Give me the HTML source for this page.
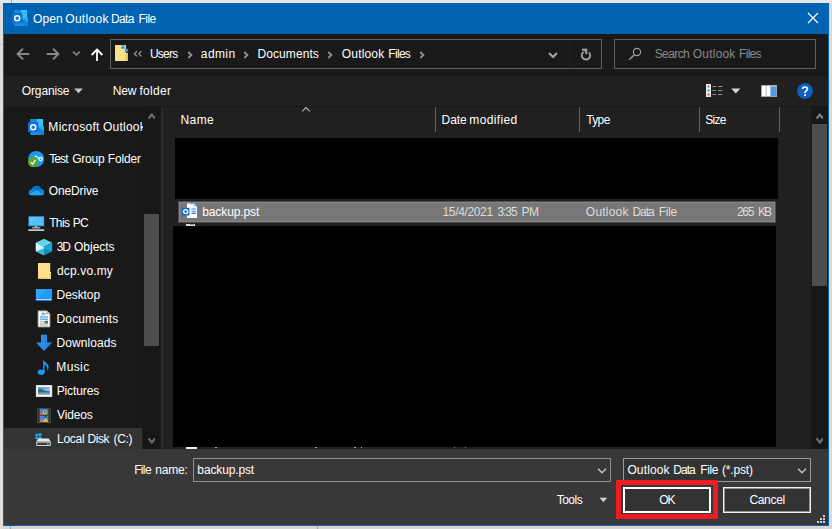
<!DOCTYPE html>
<html><head><meta charset="utf-8"><title>Open Outlook Data File</title>
<style>
html,body{margin:0;padding:0;}
body{width:832px;height:529px;overflow:hidden;background:#e7e7e7;position:relative;font-family:"Liberation Sans",sans-serif;font-size:12px;}
.a{position:absolute;}
.t{position:absolute;white-space:pre;line-height:16px;height:16px;font-size:12px;}

</style></head>
<body>
<svg width="0" height="0" style="position:absolute">
<defs>
<symbol id="ol" viewBox="0 0 16 16">
<rect x="2.3" y="0" width="7" height="8" fill="#1490df"/>
<rect x="9" y="0" width="6" height="8" fill="#35c1f8"/>
<path d="M2.3 8H15L16 7.5V16H2.3Z" fill="#1a8fe3"/>
<path d="M9 8L16 7.4V12.2Z" fill="#28a8ea"/>
<path d="M9 8L16 12.2V16H12Z" fill="#1178d0" opacity=".55"/>
<rect x="0" y="3.1" width="10.4" height="10.1" rx=".6" fill="#1071d3"/>
<circle cx="5.2" cy="8.15" r="2.5" fill="none" stroke="#fff" stroke-width="1.5"/>
</symbol>
<symbol id="chev" viewBox="0 0 6 8"><path d="M1.2 1L4.4 4L1.2 7" fill="none" stroke="#8c8c8c" stroke-width="1.9"/></symbol>
</defs>
</svg>
<!-- outside desktop hints -->
<div class="a" style="left:829px;top:3px;width:3px;height:526px;background:#d9d9d9"></div>
<div class="a" style="left:0;top:3px;width:3px;height:526px;background:#e0dedc"></div>
<div class="a" style="left:3px;top:526px;width:829px;height:3px;background:#d5d5d5"></div>
<div class="a" style="left:11px;top:0;width:1px;height:3px;background:#a8a8a8"></div>
<div class="a" style="left:0;top:44px;width:3px;height:1px;background:#c4c4c4"></div>
<div class="a" style="left:10px;top:526px;width:1px;height:3px;background:#999"></div>
<div class="a" style="left:317px;top:526px;width:1px;height:3px;background:#a4a4a4"></div>
<!-- window -->
<div class="a" style="left:3px;top:3px;width:826px;height:523px;background:#0063b1"></div>
<!-- nav bar -->
<div class="a" style="left:4px;top:34px;width:824px;height:42px;background:#191919"></div>
<!-- toolbar -->
<div class="a" style="left:4px;top:76px;width:824px;height:30px;background:#202020"></div>
<!-- main -->
<div class="a" style="left:4px;top:106px;width:824px;height:343px;background:#191919"></div>
<!-- sidebar scrollbar track -->
<div class="a" style="left:143px;top:106px;width:18px;height:343px;background:#171717"></div>
<div class="a" style="left:144px;top:214px;width:15px;height:132px;background:#4d4d4d"></div>
<!-- splitter strip -->
<div class="a" style="left:161px;top:107px;width:2px;height:342px;background:#2b2b2b"></div>
<!-- file list bg -->
<div class="a" style="left:163px;top:107px;width:649px;height:342px;background:#202020"></div>
<!-- right scrollbar -->
<div class="a" style="left:811px;top:106px;width:17px;height:343px;background:#171717"></div>
<div class="a" style="left:812px;top:124px;width:15px;height:162px;background:#4d4d4d"></div>
<!-- sidebar selected -->
<div class="a" style="left:4px;top:428px;width:138px;height:21px;background:#333"></div>
<!-- bottom panel -->
<div class="a" style="left:4px;top:449px;width:824px;height:76px;background:#383838"></div>
<!-- column separators -->
<div class="a" style="left:435px;top:107px;width:1px;height:25px;background:#636363"></div>
<div class="a" style="left:579px;top:107px;width:1px;height:25px;background:#636363"></div>
<div class="a" style="left:699px;top:107px;width:1px;height:25px;background:#636363"></div>
<div class="a" style="left:779px;top:107px;width:1px;height:25px;background:#636363"></div>
<!-- black redactions -->
<div class="a" style="left:175px;top:138px;width:603px;height:61px;background:#000"></div>
<div class="a" style="left:173px;top:226px;width:603px;height:221px;background:#000"></div>
<!-- selected row -->
<div class="a" style="left:178px;top:201px;width:598px;height:22px;background:#777;border:1px solid #4e4e4e;box-sizing:border-box"></div>
<div class="a" style="left:179px;top:202px;width:596px;height:20px;border:1px solid #868686;box-sizing:border-box"></div>
<!-- address box -->
<div class="a" style="left:110px;top:39px;width:492px;height:30px;border:1px solid #5e5e5e;box-sizing:border-box;background:#191919"></div>
<!-- search box -->
<div class="a" style="left:614px;top:39px;width:202px;height:30px;border:1px solid #5e5e5e;box-sizing:border-box;background:#191919"></div>
<!-- filename input -->
<div class="a" style="left:193px;top:458px;width:418px;height:24px;border:1px solid #8f8f8f;box-sizing:border-box;background:#383838"></div>
<!-- filter combo -->
<div class="a" style="left:623px;top:458px;width:188px;height:24px;border:1px solid #9a9a9a;box-sizing:border-box;background:#333"></div>
<!-- OK -->
<div class="a" style="left:616px;top:480px;width:102px;height:39px;border:5px solid #ed1c24;box-sizing:border-box;background:#2f3a3a"></div>
<div class="a" style="left:623px;top:487px;width:88px;height:26px;border:2px solid #fff;box-sizing:border-box;background:#333"></div>
<!-- Cancel -->
<div class="a" style="left:723px;top:487px;width:88px;height:26px;border:1px solid #f2f2f2;box-sizing:border-box;background:#333"></div>
<div class="a" style="left:724px;top:488px;width:86px;height:24px;border:1px solid #909090;box-sizing:border-box"></div>
<!-- title icon + close -->
<svg class="a" style="left:12px;top:10px" width="16" height="16"><use href="#ol"/></svg>
<svg class="a" style="left:807px;top:12px" width="12" height="12" viewBox="0 0 12 12"><path d="M1 1L11 11M11 1L1 11" stroke="#fff" stroke-width="1.2" fill="none"/></svg>
<!-- nav arrows -->
<svg class="a" style="left:16px;top:47px" width="14" height="14" viewBox="0 0 14 14"><path d="M13.3 7H2.2M7 1.6L1.6 7L7 12.4" fill="none" stroke="#888" stroke-width="2"/></svg>
<svg class="a" style="left:46px;top:47px" width="14" height="14" viewBox="0 0 14 14"><path d="M.7 7H11.8M7 1.6L12.4 7L7 12.4" fill="none" stroke="#888" stroke-width="2"/></svg>
<svg class="a" style="left:72px;top:50px" width="9" height="7" viewBox="0 0 9 7"><path d="M1 1.6L4.4 5L7.8 1.6" fill="none" stroke="#7a7a7a" stroke-width="1.9"/></svg>
<svg class="a" style="left:90px;top:48px" width="14" height="14" viewBox="0 0 14 14"><path d="M7 13V2M1.6 7L7 1.6L12.4 7" fill="none" stroke="#fff" stroke-width="1.8"/></svg>
<!-- address folder (zip) -->
<svg class="a" style="left:114px;top:44px" width="15" height="18" viewBox="0 0 15 18"><path d="M1 1H12V9H14V17H1Z" fill="#f8d775"/><path d="M1 1H11V17H1Z" fill="#fbe08c"/><path d="M12 10H14V17H12Z" fill="#e9c14f"/><rect x="7.4" y="1.4" width="3.1" height="3.3" fill="#2b8de2"/><rect x="8" y="2" width="1.4" height="1.4" fill="#6cc0f8"/><rect x="10.9" y="4.7" width="3.2" height="3.5" fill="#1f83dc"/><rect x="11.6" y="5.4" width="1.4" height="1.4" fill="#6cc0f8"/></svg>
<svg class="a" style="left:133px;top:50px" width="10" height="8" viewBox="0 0 10 8"><path d="M4 1.2L1.4 3.8L4 6.4M8.4 1.2L5.8 3.8L8.4 6.4" fill="none" stroke="#a4a4a4" stroke-width="1.15"/></svg>
<svg class="a" style="left:186.5px;top:51px" width="6" height="8"><use href="#chev"/></svg>
<svg class="a" style="left:243px;top:51px" width="6" height="8"><use href="#chev"/></svg>
<svg class="a" style="left:327px;top:51px" width="6" height="8"><use href="#chev"/></svg>
<svg class="a" style="left:419px;top:51px" width="6" height="8"><use href="#chev"/></svg>
<!-- address dropdown + refresh -->
<svg class="a" style="left:547px;top:51px" width="12" height="8" viewBox="0 0 12 8"><path d="M2 2L6 6L10 2" fill="none" stroke="#a6a6a6" stroke-width="2"/></svg>
<div class="a" style="left:569px;top:40px;width:1px;height:28px;background:#1f1f1f"></div>
<svg class="a" style="left:580px;top:47px" width="13" height="14" viewBox="0 0 13 14"><path d="M8.97 5.43A4.2 4.2 0 1 1 3.6 4.9" fill="none" stroke="#9c9c9c" stroke-width="1.9"/><path d="M1.9 1.8H7.2V7.3Z" fill="#7c7c7c"/><path d="M1.9 2.7H6.3V7.3" fill="none" stroke="#a2a2a2" stroke-width="1.8"/></svg>
<!-- search magnifier -->
<svg class="a" style="left:628px;top:47px" width="15" height="14" viewBox="0 0 15 14"><circle cx="9" cy="5" r="3.6" fill="none" stroke="#a2a2a2" stroke-width="1.1"/><path d="M6.3 7.7L1.2 12.8" stroke="#a2a2a2" stroke-width="1.3"/></svg>
<!-- toolbar -->
<svg class="a" style="left:74px;top:88px" width="9" height="6" viewBox="0 0 9 6"><path d="M.2 .6H8.8L4.5 5.2Z" fill="#c8c8c8"/></svg>
<svg class="a" style="left:706px;top:84px" width="17" height="13" viewBox="0 0 17 13"><rect x="0" y="0" width="5" height="13" fill="#ececec"/><rect x="1.6" y="1.6" width="1.8" height="1.8" fill="#3f8f5a"/><rect x="1.6" y="5.6" width="1.8" height="1.8" fill="#2f7fd8"/><rect x="1.6" y="9.6" width="1.8" height="1.8" fill="#d83a2f"/><path d="M6.4 2.5H10M12 2.5H16.4M6.4 6.5H10M12 6.5H16.4M6.4 10.5H10M12 10.5H16.4" stroke="#8e8e8e" stroke-width="1"/></svg>
<svg class="a" style="left:731px;top:88px" width="10" height="6" viewBox="0 0 10 6"><path d="M.3 .6H9.3L4.8 5.4Z" fill="#d8d8d8"/></svg>
<svg class="a" style="left:761px;top:85px" width="16" height="12" viewBox="0 0 16 12"><rect x=".5" y=".5" width="15" height="11" fill="#fff" stroke="#a8a8a8"/><rect x="4.6" y="1" width="1" height="10" fill="#b8b8b8"/><rect x="9.4" y="1.4" width="5.8" height="9.8" fill="#4a9be6"/><rect x="9.4" y="1" width="5.8" height="1" fill="#9ab8d8"/></svg>
<svg class="a" style="left:797px;top:83px" width="16" height="16" viewBox="0 0 16 16"><circle cx="8" cy="8" r="7.8" fill="#0a64c8"/><path d="M5.6 6.1C5.6 3.3 10.4 3.3 10.4 6.1C10.4 7.8 8 7.9 8 9.9" fill="none" stroke="#fff" stroke-width="1.7"/><rect x="7.1" y="11.2" width="1.8" height="1.8" fill="#fff"/></svg>
<!-- sort caret -->
<svg class="a" style="left:300.6px;top:106px" width="10" height="7" viewBox="0 0 10 7"><path d="M1.2 5.4L5 1.6L8.8 5.4" fill="none" stroke="#b6b6b6" stroke-width="1.1"/></svg>
<!-- scroll chevrons -->
<svg class="a" style="left:147.7px;top:112px" width="7.6" height="9" viewBox="0.7 0 7.6 9"><path d="M1.2 6.6L4.5 2.6L7.8 6.6" fill="none" stroke="#6c6c6c" stroke-width="2.3"/></svg>
<svg class="a" style="left:147.7px;top:436px" width="7.6" height="9" viewBox="0.7 0 7.6 9"><path d="M1.2 2.4L4.5 6.4L7.8 2.4" fill="none" stroke="#6c6c6c" stroke-width="2.3"/></svg>
<svg class="a" style="left:815.7px;top:112px" width="7.6" height="9" viewBox="0.7 0 7.6 9"><path d="M1.2 6.6L4.5 2.6L7.8 6.6" fill="none" stroke="#7e7e7e" stroke-width="2.3"/></svg>
<svg class="a" style="left:815.7px;top:436px" width="7.6" height="9" viewBox="0.7 0 7.6 9"><path d="M1.2 2.4L4.5 6.4L7.8 2.4" fill="none" stroke="#6c6c6c" stroke-width="2.3"/></svg>
<!-- sidebar icons -->
<svg class="a" style="left:28px;top:119px" width="16" height="16"><use href="#ol"/></svg>
<svg class="a" style="left:28px;top:151px" width="17" height="17" viewBox="0 0 17 17"><circle cx="8.2" cy="8" r="8" fill="#1a9bf0"/><circle cx="12.6" cy="8" r="1.6" fill="none" stroke="#fff" stroke-width="1.1"/><path d="M6.6 5.4H8.6C10 5.4 10 8 11 8" fill="none" stroke="#fff" stroke-width="1.1"/><circle cx="5.1" cy="11.1" r="5.1" fill="#5aa82c"/><path d="M2.8 11.2L4.6 13L7.4 8.8" fill="none" stroke="#fff" stroke-width="1.2"/></svg>
<svg class="a" style="left:28px;top:185.4px" width="17" height="11" viewBox="0 0 17 12" preserveAspectRatio="none"><path d="M3.6 11.2C-.6 11.2 -.4 5 3.8 4.6C5.4 -.4 12 -.2 13 4.4C17.4 4.6 17.4 11.2 13.4 11.2Z" fill="#1183de"/><path d="M4.6 3.4C6.6 -.4 12 0 13 4.4L9 6.6Z" fill="#0c6cc6"/><path d="M1.4 10.2L8.4 5.6L15.6 10C15 10.8 14.4 11.2 13.4 11.2H3.6C2.6 11.2 1.8 10.8 1.4 10.2Z" fill="#29a5ec"/></svg>
<svg class="a" style="left:28px;top:216px" width="17" height="16" viewBox="0 0 17 16"><rect x=".4" y=".2" width="15.8" height="10" fill="#2a9ae6"/><rect x="1.2" y="1" width="14.2" height="8.4" fill="#55bdf7"/><path d="M1.2 9.4V1H9Z" fill="#6ec9fa" opacity=".6"/><rect x="7.2" y="10.2" width="2" height="1.2" fill="#dfe3e8"/><rect x="4.2" y="11.2" width="8" height="1.2" fill="#c4cad2"/><rect x=".2" y="13.2" width="16.2" height="1.9" rx=".9" fill="#c2c8d0"/></svg>
<svg class="a" style="left:35px;top:238px" width="18" height="18" viewBox="0 0 18 18"><path d="M9 .8L17.2 4.8L9 8.8L.8 4.8Z" fill="#62d4ec"/><path d="M.8 4.8L9 8.8V17.2L.8 13.2Z" fill="#c6f0fa"/><path d="M17.2 4.8L9 8.8V17.2L17.2 13.2Z" fill="#1ba8cf"/><path d="M.8 13.2L9 10.4V17.2Z" fill="#35b9d8"/><path d="M17.2 13.2L9 10.4V17.2Z" fill="#0f8db6"/><path d="M.8 4.8L4.6 6.7V12L.8 13.2Z" fill="#e6f9fd" opacity=".7"/></svg>
<svg class="a" style="left:38px;top:263px" width="14" height="16" viewBox="0 0 14 16"><path d="M0 0H12.2V9.2H13V16H0Z" fill="#ffe08a"/><path d="M0 14.8H13V16H0Z" fill="#f2c24e"/><path d="M10.4 9.2H13V16H10.4Z" fill="#f5cf63"/><path d="M10.4 9.2H13V10H11.2V16H10.4Z" fill="#fff0b8"/></svg>
<svg class="a" style="left:35px;top:289px" width="18" height="12" viewBox="0 0 18 12"><rect x=".9" y="0" width="16.2" height="11.8" fill="#1e9cf6"/><path d="M.9 0H11L5.4 9.4H.9Z" fill="#3aabfa" opacity=".55"/><rect x=".9" y="9" width="16.2" height="2.8" fill="#0f7ddc"/><path d="M2 10.4H16" stroke="#eaf4ff" stroke-width=".9"/><rect x="1.6" y="9.8" width="1.2" height="1.2" fill="#fff"/><rect x="14.6" y="9.8" width="1.2" height="1.2" fill="#fff"/></svg>
<svg class="a" style="left:37px;top:310px" width="14" height="18" viewBox="0 0 14 18"><path d="M1 .8H10L13 3.8V17H1Z" fill="#fafafa" stroke="#8a8a8a" stroke-width=".8"/><path d="M10 .8V3.8H13" fill="#d8d8d8" stroke="#8a8a8a" stroke-width=".6"/><path d="M3 7H11M3 9.2H11" stroke="#2b86dc" stroke-width="1"/><path d="M3 11.4H6.4M3 13.2H6.4M3 15H11" stroke="#9a9a9a" stroke-width=".8"/><rect x="7.4" y="10.8" width="3.6" height="2.8" fill="#4b7d6a"/><path d="M4.6 5.4L6 2.6L7.2 5.4M7.8 3.6H9.4" stroke="#2b86dc" stroke-width=".9" fill="none"/></svg>
<svg class="a" style="left:35px;top:334px" width="18" height="18" viewBox="0 0 18 18"><path d="M6 .8H12V8.6H17L9 17L1 8.6H6Z" fill="#2b8fe8"/><path d="M9 .8H12V8.6H17L9 17Z" fill="#1f7fd8" opacity=".5"/></svg>
<svg class="a" style="left:37px;top:358px" width="14" height="18" viewBox="0 0 14 18"><ellipse cx="4.2" cy="14.2" rx="3.4" ry="2.6" fill="#1a9ef5"/><path d="M6.2 14.2V1C6.6 4.4 11.6 5.2 11.6 9.2C11.6 10.8 11 11.8 10.2 12.6C10.8 9.6 9.4 7.6 7.6 6.8V14.2Z" fill="#1a9ef5"/></svg>
<svg class="a" style="left:35px;top:385px" width="18" height="12" viewBox="0 0 18 12"><defs><linearGradient id="sky" x1="0" y1="0" x2="1" y2="0"><stop offset="0" stop-color="#4f92e2"/><stop offset="1" stop-color="#9cc4ee"/></linearGradient></defs><rect x=".9" y="0" width="16.3" height="12" fill="#f4f4f4"/><rect x="1.4" y=".5" width="15.3" height="11" fill="none" stroke="#d0d0d0" stroke-width=".6"/><rect x="3" y="2" width="12" height="8" fill="url(#sky)"/><path d="M3 5C4.6 3.6 6.2 3.8 8 5C10 6.2 12.4 6.2 15 6.6V8H3Z" fill="#3c6b58"/><path d="M3 7.6C7 7 11 7.4 15 7.2V10H3Z" fill="#6f95b4"/><path d="M3 8.8H15V10H3Z" fill="#9fb8cc"/></svg>
<svg class="a" style="left:37px;top:408px" width="14" height="15" viewBox="0 0 14 15"><rect x="0" y="0" width="14" height="15" fill="#484848"/><rect x="3" y="1" width="8" height="6" fill="#4a80e0"/><rect x="3" y="8" width="8" height="6" fill="#4a80e0"/><rect x="3" y="5" width="3.4" height="2" fill="#e0603a"/><rect x="8.6" y="5.4" width="2.4" height="1.6" fill="#3c9a4a"/><circle cx="7.8" cy="4.2" r="1.9" fill="#e8d038"/><rect x="7" y="3.4" width="1.6" height="1.2" fill="#2a2a2a"/><rect x="3" y="12" width="3" height="2" fill="#e07a3a"/><rect x="6" y="12.4" width="5" height="1.6" fill="#d8c040"/><path d="M7.4 8.4L9.8 8.4L8.8 11Z" fill="#2a2a2a"/><circle cx="8.6" cy="11.4" r="1.2" fill="#e8d038"/><g fill="#1c1c1c"><rect x=".7" y="1" width="1.3" height="1.4"/><rect x=".7" y="3.6" width="1.3" height="1.4"/><rect x=".7" y="6.2" width="1.3" height="1.4"/><rect x=".7" y="8.8" width="1.3" height="1.4"/><rect x=".7" y="11.4" width="1.3" height="1.4"/><rect x="12" y="1" width="1.3" height="1.4"/><rect x="12" y="3.6" width="1.3" height="1.4"/><rect x="12" y="6.2" width="1.3" height="1.4"/><rect x="12" y="8.8" width="1.3" height="1.4"/><rect x="12" y="11.4" width="1.3" height="1.4"/></g></svg>
<svg class="a" style="left:35px;top:433px" width="17" height="14" viewBox="0 0 17 14"><rect x=".4" y=".8" width="2.6" height="2.4" fill="#12b4f2"/><rect x="3.6" y=".2" width="2.8" height="3" fill="#12b4f2"/><rect x=".4" y="3.8" width="2.6" height="2.4" fill="#12b4f2"/><rect x="3.6" y="3.8" width="2.8" height="2.6" fill="#12b4f2"/><path d="M3.4 5.4H13.6L15.8 8.6H1.2Z" fill="#e8e8e8"/><rect x="1.2" y="8.4" width="14.6" height="4.6" rx=".8" fill="#d4d4d4"/><rect x="2.2" y="9.6" width="12.6" height="2.4" fill="#3c3c3c"/><circle cx="12.8" cy="10.8" r=".9" fill="#3ee03e"/></svg>
<!-- file row icon -->
<svg class="a" style="left:182px;top:203px" width="16" height="16" viewBox="0 0 16 16"><path d="M5 .6H12.2L15 3.4V15H5Z" fill="#fdfdfd"/><path d="M8.6 .2L11 .2 11 1.4 8.6 1.4Z" fill="#4aa3ee"/><path d="M11.6 1.6H14V3.4H11.6Z" fill="#7bbcf2"/><path d="M9.4 6H13.8M9.4 8.2H13.8M9.4 10.4H13.8" stroke="#2f86da" stroke-width="1.1"/><rect x="0" y="4.8" width="7.4" height="7.6" fill="#106ccc"/><circle cx="3.7" cy="8.6" r="2.05" fill="none" stroke="#fff" stroke-width="1.35"/></svg>
<!-- partial next row icon -->
<div class="a" style="left:186px;top:224px;width:9px;height:2px;background:#dcdcdc"></div>
<div class="a" style="left:190px;top:224px;width:4px;height:1px;background:#4aa3ee"></div>
<!-- peeking text bits under black rect -->
<div class="a" style="left:186px;top:447px;width:11px;height:2px;background:#f0f0f0"></div>
<div class="a" style="left:215px;top:447px;width:2px;height:1px;background:#a8a8a0"></div>
<div class="a" style="left:315px;top:447px;width:2px;height:1px;background:#a8a8a0"></div>
<div class="a" style="left:354px;top:447px;width:2px;height:1px;background:#a0a0a0"></div>
<div class="a" style="left:361px;top:447px;width:1px;height:1px;background:#b0b0b0"></div>
<div class="a" style="left:454px;top:447px;width:1px;height:1px;background:#8c8c8c"></div>
<div class="a" style="left:465px;top:447px;width:1px;height:1px;background:#8c8c8c"></div>
<!-- input dropdown chevrons -->
<svg class="a" style="left:597px;top:467px" width="11" height="8" viewBox="0 0 11 8"><path d="M1 1.8L5 5.8L9 1.8" fill="none" stroke="#cacaca" stroke-width="1.25"/></svg>
<svg class="a" style="left:797px;top:467px" width="11" height="8" viewBox="0 0 11 8"><path d="M1 1.8L5 5.8L9 1.8" fill="none" stroke="#cacaca" stroke-width="1.25"/></svg>
<!-- tools triangle -->
<svg class="a" style="left:599px;top:497px" width="9" height="6" viewBox="0 0 9 6"><path d="M.6 .8H8.2L4.4 5Z" fill="#d8d8d8"/></svg>
<!-- resize grip -->
<svg class="a" style="left:816px;top:514px" width="10" height="10" viewBox="0 0 10 10"><g fill="#d6d6d6"><rect x="7" y="1" width="2" height="2"/><rect x="4" y="4" width="2" height="2"/><rect x="7" y="4" width="2" height="2"/><rect x="1" y="7" width="2" height="2"/><rect x="4" y="7" width="2" height="2"/><rect x="7" y="7" width="2" height="2"/></g></svg>

<span class="t" style="left:33.05px;top:11px;letter-spacing:0.072px;color:#ffffff;">Open</span>
<span class="t" style="left:65.25px;top:11px;letter-spacing:0.295px;color:#ffffff;">Outlook</span>
<span class="t" style="left:111.10px;top:11px;letter-spacing:-0.714px;color:#ffffff;">Data</span>
<span class="t" style="left:138.60px;top:11px;letter-spacing:-0.552px;color:#ffffff;">File</span>
<span class="t" style="left:149.94px;top:46px;letter-spacing:-0.777px;color:#ffffff;">Users</span>
<span class="t" style="left:200.87px;top:46px;letter-spacing:0.377px;color:#ffffff;">admin</span>
<span class="t" style="left:257.46px;top:46px;letter-spacing:0.090px;color:#ffffff;">Documents</span>
<span class="t" style="left:341.87px;top:46px;letter-spacing:0.153px;color:#ffffff;">Outlook</span>
<span class="t" style="left:388.30px;top:46px;letter-spacing:-0.694px;color:#ffffff;">Files</span>
<span class="t" style="left:654.63px;top:46px;letter-spacing:-0.584px;color:#8a8a8a;">Search</span>
<span class="t" style="left:692.85px;top:46px;letter-spacing:0.195px;color:#8a8a8a;">Outlook</span>
<span class="t" style="left:739.03px;top:46px;letter-spacing:-0.690px;color:#8a8a8a;">Files</span>
<span class="t" style="left:21.80px;top:83px;letter-spacing:-0.135px;color:#ffffff;">Organise</span>
<span class="t" style="left:112.68px;top:83px;letter-spacing:-0.161px;color:#ffffff;">New</span>
<span class="t" style="left:139.44px;top:83px;letter-spacing:0.321px;color:#ffffff;">folder</span>
<span class="t" style="left:180.58px;top:112px;letter-spacing:0.379px;color:#ffffff;">Name</span>
<span class="t" style="left:441.58px;top:112px;letter-spacing:-0.108px;color:#ffffff;">Date</span>
<span class="t" style="left:469.33px;top:112px;letter-spacing:0.355px;color:#ffffff;">modified</span>
<span class="t" style="left:586.16px;top:112px;letter-spacing:-0.605px;color:#ffffff;">Type</span>
<span class="t" style="left:705.21px;top:112px;letter-spacing:-0.729px;color:#ffffff;">Size</span>
<span class="t" style="left:48.35px;top:119px;letter-spacing:0.295px;color:#ffffff;">Microsoft</span>
<div class="a" style="left:0;top:119px;width:143px;height:16px;overflow:hidden"><span class="t" style="left:102.95px;top:0;letter-spacing:0.239px;color:#ffffff">Outlook</span></div>
<span class="t" style="left:49.16px;top:151px;letter-spacing:-0.898px;color:#ffffff;">Test</span>
<span class="t" style="left:72.17px;top:151px;letter-spacing:-0.182px;color:#ffffff;">Group</span>
<span class="t" style="left:107.78px;top:151px;letter-spacing:-0.160px;color:#ffffff;">Folder</span>
<span class="t" style="left:48.80px;top:183px;letter-spacing:-0.136px;color:#ffffff;">OneDrive</span>
<span class="t" style="left:49.16px;top:215px;letter-spacing:-0.641px;color:#ffffff;">This</span>
<span class="t" style="left:72.68px;top:215px;letter-spacing:-0.589px;color:#ffffff;">PC</span>
<span class="t" style="left:56.69px;top:239px;letter-spacing:-1.105px;color:#ffffff;">3D</span>
<span class="t" style="left:74.05px;top:239px;letter-spacing:-0.029px;color:#ffffff;">Objects</span>
<span class="t" style="left:56.99px;top:263px;letter-spacing:0.146px;color:#ffffff;">dcp.vo.my</span>
<span class="t" style="left:56.60px;top:287px;letter-spacing:-0.085px;color:#ffffff;">Desktop</span>
<span class="t" style="left:56.60px;top:311px;letter-spacing:0.108px;color:#ffffff;">Documents</span>
<span class="t" style="left:56.60px;top:335px;letter-spacing:0.052px;color:#ffffff;">Downloads</span>
<span class="t" style="left:56.35px;top:359px;letter-spacing:0.369px;color:#ffffff;">Music</span>
<span class="t" style="left:56.68px;top:383px;letter-spacing:-0.112px;color:#ffffff;">Pictures</span>
<span class="t" style="left:57.09px;top:407px;letter-spacing:-0.180px;color:#ffffff;">Videos</span>
<span class="t" style="left:57.01px;top:431px;letter-spacing:-0.246px;color:#ffffff;">Local</span>
<span class="t" style="left:87.60px;top:431px;letter-spacing:-0.459px;color:#ffffff;">Disk</span>
<span class="t" style="left:113.60px;top:431px;letter-spacing:-0.326px;color:#ffffff;">(C:)</span>
<span class="t" style="left:202.23px;top:204px;letter-spacing:-0.102px;color:#ffffff;">backup.pst</span>
<span class="t" style="left:442.55px;top:204px;letter-spacing:-0.355px;color:#dcdcdc;">15/4/2021</span>
<span class="t" style="left:497.41px;top:204px;letter-spacing:-1.051px;color:#dcdcdc;">3:35</span>
<span class="t" style="left:521.40px;top:204px;letter-spacing:-0.282px;color:#dcdcdc;">PM</span>
<span class="t" style="left:585.85px;top:204px;letter-spacing:0.199px;color:#dcdcdc;">Outlook</span>
<span class="t" style="left:632.40px;top:204px;letter-spacing:-0.995px;color:#dcdcdc;">Data</span>
<span class="t" style="left:658.84px;top:204px;letter-spacing:-0.345px;color:#dcdcdc;">File</span>
<span class="t" style="left:736.97px;top:204px;letter-spacing:-1.336px;color:#dcdcdc;">265</span>
<span class="t" style="left:758.05px;top:204px;letter-spacing:-2.033px;color:#dcdcdc;">KB</span>
<span class="t" style="left:134.16px;top:462px;letter-spacing:-0.639px;color:#ffffff;">File</span>
<span class="t" style="left:155.37px;top:462px;letter-spacing:-0.247px;color:#ffffff;">name:</span>
<span class="t" style="left:197.37px;top:462px;letter-spacing:-0.140px;color:#ffffff;">backup.pst</span>
<span class="t" style="left:627.39px;top:462px;letter-spacing:0.148px;color:#ffffff;">Outlook</span>
<span class="t" style="left:673.30px;top:462px;letter-spacing:-0.995px;color:#ffffff;">Data</span>
<span class="t" style="left:700.30px;top:462px;letter-spacing:-0.406px;color:#ffffff;">File</span>
<span class="t" style="left:721.91px;top:462px;letter-spacing:-0.162px;color:#ffffff;">(*.pst)</span>
<span class="t" style="left:556.63px;top:492px;letter-spacing:-0.487px;color:#ffffff;">Tools</span>
<span class="t" style="left:659.13px;top:492px;letter-spacing:-0.928px;color:#ffffff;">OK</span>
<span class="t" style="left:749.41px;top:492px;letter-spacing:-0.313px;color:#ffffff;">Cancel</span>

</body></html>
